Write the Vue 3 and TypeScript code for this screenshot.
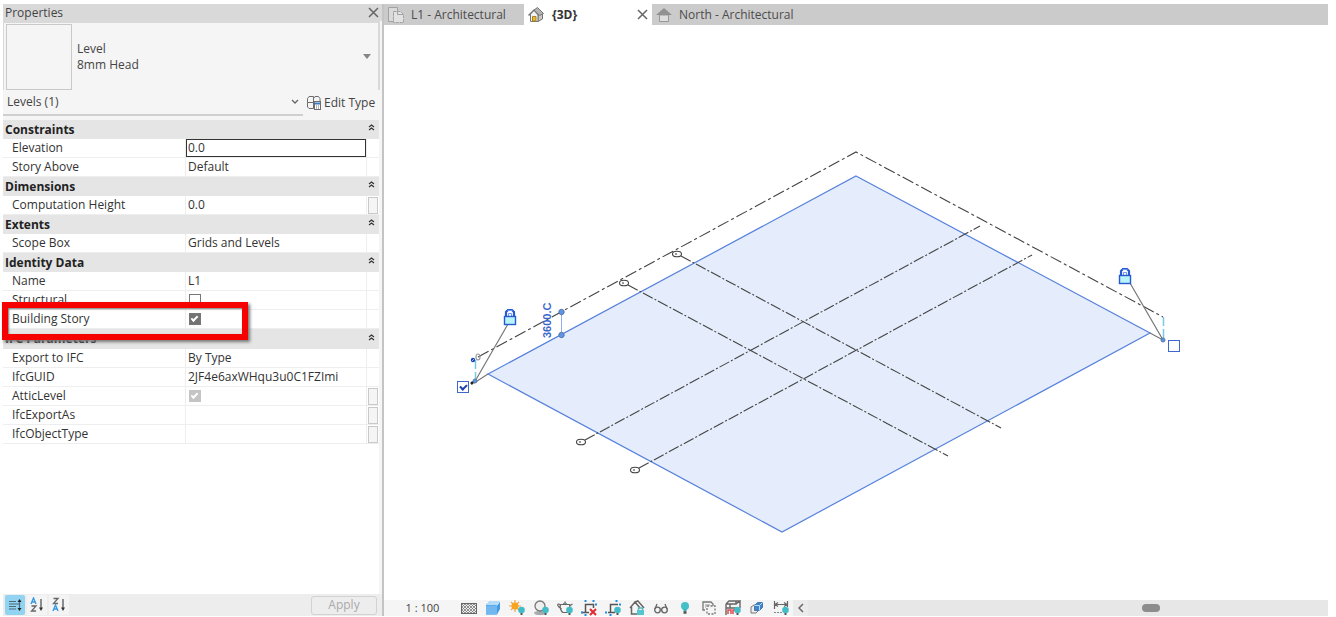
<script setup lang="ts">
import { ref } from 'vue'

type Kind = 'input' | 'check'
interface Row {
  id: string
  label: string
  kind: Kind
  value?: string
  checked?: boolean
  disabled?: boolean
  extra?: boolean
  boxed?: boolean
  marked?: boolean
}
interface Section {
  title: string
  rows: Row[]
}

const sections = ref<Section[]>([
  {
    title: 'Constraints',
    rows: [
      { id: 'elevation', label: 'Elevation', kind: 'input', value: '0.0', boxed: true },
      { id: 'story-above', label: 'Story Above', kind: 'input', value: 'Default' },
    ],
  },
  {
    title: 'Dimensions',
    rows: [{ id: 'height', label: 'Computation Height', kind: 'input', value: '0.0', extra: true }],
  },
  {
    title: 'Extents',
    rows: [{ id: 'scope', label: 'Scope Box', kind: 'input', value: 'Grids and Levels' }],
  },
  {
    title: 'Identity Data',
    rows: [
      { id: 'name', label: 'Name', kind: 'input', value: 'L1' },
      { id: 'structural', label: 'Structural', kind: 'check', checked: false },
      { id: 'story', label: 'Building Story', kind: 'check', checked: true, marked: true },
    ],
  },
  {
    title: 'IFC Parameters',
    rows: [
      { id: 'export', label: 'Export to IFC', kind: 'input', value: 'By Type' },
      { id: 'guid', label: 'IfcGUID', kind: 'input', value: '2JF4e6axWHqu3u0C1FZImi' },
      { id: 'attic', label: 'AtticLevel', kind: 'check', checked: true, disabled: true, extra: true },
      { id: 'export-as', label: 'IfcExportAs', kind: 'input', value: '', extra: true },
      { id: 'object-type', label: 'IfcObjectType', kind: 'input', value: '', extra: true },
    ],
  },
])

const gridLines = [
  { x1: 681, y1: 256, x2: 1001, y2: 428, cx: 677, cy: 254 },
  { x1: 628, y1: 285, x2: 948, y2: 456, cx: 624, cy: 283 },
  { x1: 585, y1: 440, x2: 980, y2: 226, cx: 581, cy: 442 },
  { x1: 639, y1: 468, x2: 1032, y2: 255, cx: 635, cy: 470 },
]
const locks = [
  { x: 510, y: 318 },
  { x: 1125, y: 277 },
]
const leftBubble = ref(true)
const rightBubble = ref(false)
</script>

<template>
  <div class="app">
    <aside class="panel">
      <header class="panel-title">
        <span>Properties</span>
        <button class="close" aria-label="Close properties">
          <svg width="11" height="11" viewBox="0 0 11 11"><path d="M1 1l9 9M10 1l-9 9" stroke="#666" stroke-width="1.5" /></svg>
        </button>
      </header>

      <button class="type-selector" aria-haspopup="listbox">
        <span class="thumb"></span>
        <span class="type-name">Level<br />8mm Head</span>
        <svg class="drop" width="8" height="5" viewBox="0 0 8 5"><path d="M0 0h8L4 5z" fill="#868686" /></svg>
      </button>

      <div class="filter">
        <div class="filter-select">
          <select aria-label="Element filter"><option>Levels (1)</option></select>
          <svg width="8" height="6" viewBox="0 0 8 6"><path d="M1 1l3 3 3-3" fill="none" stroke="#666" stroke-width="1.3" /></svg>
        </div>
        <button class="edit-type">
          <svg width="14" height="14" viewBox="0 0 14 14" fill="none" stroke="#6c6c6c">
            <path d="M.5 6.500V2.500L2 .5h4.500v6zM6.500 6.500v-4L8 .5h3.500l1.500 2v4zM.5 6.500v4.500l1.500 1.500h4.500v-6" />
            <rect x="7.500" y="5.500" width="6" height="8" fill="#fff" />
            <path d="M8 7.500h5" stroke="#367ac8" stroke-width="2" />
            <path d="M9 10h1M11 10h1M9 12h1M11 12h1" />
          </svg>
          Edit Type
        </button>
      </div>

      <div class="props">
        <table>
          <colgroup><col class="c-name" /><col /><col class="c-extra" /></colgroup>
          <tbody v-for="s in sections" :key="s.title">
            <tr class="section">
              <th colspan="2" scope="colgroup">{{ s.title }}</th>
              <td>
                <button class="fold" :aria-label="'Collapse ' + s.title">
                  <svg width="7" height="7" viewBox="0 0 7 7"><path d="M1 3l2.500-2L6 3M1 6l2.500-2L6 6" fill="none" stroke="#333" stroke-width="1.200" /></svg>
                </button>
              </td>
            </tr>
            <tr v-for="r in s.rows" :key="r.id" :class="{ marked: r.marked }">
              <td class="name"><label :for="r.id">{{ r.label }}</label></td>
              <td class="value">
                <input v-if="r.kind === 'check'" :id="r.id" v-model="r.checked" type="checkbox" class="tick" :disabled="r.disabled" />
                <input v-else :id="r.id" v-model="r.value" type="text" class="field" :class="{ boxed: r.boxed }" />
              </td>
              <td class="extra">
                <button v-if="r.extra" :aria-label="'Associate ' + r.label"></button>
                <span v-if="r.marked" class="marker"></span>
              </td>
            </tr>
          </tbody>
        </table>
      </div>

      <footer class="panel-foot">
        <button class="sort on" aria-label="Default order">
          <svg width="16" height="16" viewBox="0 0 16 16" fill="none" stroke="#4b6c7c" stroke-width="1.200">
            <path d="M2 4.500h7M2 7h7M2 9.500h7M2 12h7M9 7h3M12.500 4v8" />
            <path d="M10.500 5l2-3 2 3zM10.500 11l2 3 2-3z" fill="#222" stroke="none" />
          </svg>
        </button>
        <button class="sort" aria-label="Sort ascending">
          <svg width="16" height="16" viewBox="0 0 16 16" fill="none">
            <path d="M2 7l2.500-6L7 7M3 5h3" stroke="#3a9be0" stroke-width="1.400" />
            <path d="M2.500 9H7l-4.500 5H7" stroke="#666" stroke-width="1.300" />
            <path d="M12 2v9" stroke="#555" stroke-width="1.300" /><path d="M10 10.500h4l-2 3.500z" fill="#333" />
          </svg>
        </button>
        <button class="sort" aria-label="Sort descending">
          <svg width="16" height="16" viewBox="0 0 16 16" fill="none">
            <path d="M2.500 1.500H7l-4.500 5H7" stroke="#666" stroke-width="1.300" />
            <path d="M2 14l2.500-6L7 14M3 12h3" stroke="#3a9be0" stroke-width="1.400" />
            <path d="M12 2v9" stroke="#555" stroke-width="1.300" /><path d="M10 10.500h4l-2 3.500z" fill="#333" />
          </svg>
        </button>
        <button class="apply" disabled>Apply</button>
      </footer>
    </aside>

    <main class="view">
      <nav class="tabs">
        <button class="tab first">
          <svg width="16" height="16" viewBox="0 0 16 16" fill="#dadada" stroke="#a2a2a2">
            <path d="M.5.500h9v4h-4v10h-5z" /><path d="M5.500 4.500h7l3 3v8h-10z" fill="#e2e2e2" stroke-dasharray="3 1" /><path d="M9.500 4.500v3h6" fill="none" />
          </svg>
          <span>L1 - Architectural</span>
        </button>
        <div class="tab active">
          <svg width="16" height="16" viewBox="0 0 16 16" stroke="#777">
            <path d="M10 14.500V7l-2-5 2-.500 4.500 5V12z" fill="#c9c9c9" />
            <path d="M2.500 7v7.500H10V7L6 3z" fill="#f2f2f2" />
            <path d="M.5 8.500L6 3l5 5.500" fill="none" stroke-width="1.500" />
            <path d="M6 3l3.500-2.500 6 6-4 2z" fill="#b2b2b2" />
            <path d="M4.500 9.500h3.500V14H4.500z" fill="#efb52c" stroke="#a88425" />
          </svg>
          <span>{3D}</span>
          <button class="close" aria-label="Close view">
            <svg width="11" height="11" viewBox="0 0 11 11"><path d="M1 1l9 9M10 1l-9 9" stroke="#666" stroke-width="1.500" /></svg>
          </button>
        </div>
        <button class="tab">
          <svg width="16" height="16" viewBox="0 0 16 16"><path d="M3.500 8h9v6.500h-9z" fill="#dedede" stroke="#999" /><path d="M0 8l8-7 8 7z" fill="#919191" /></svg>
          <span>North - Architectural</span>
        </button>
      </nav>

      <div class="stage">
        <svg class="drawing" viewBox="384 25 944 575" preserveAspectRatio="xMinYMin meet">
          <polygon points="856,176 1150,333 782,532 488,374" fill="#e5edfc" stroke="#5580dc" stroke-width="1.200" />
          <path d="M478 357L856 152L1163 317" fill="none" stroke="#444" stroke-width="1.100" stroke-dasharray="12 3 3 3" />
          <g stroke="#444" fill="none" stroke-width="1.100">
            <template v-for="g in gridLines" :key="g.cx">
              <line :x1="g.x1" :y1="g.y1" :x2="g.x2" :y2="g.y2" stroke-dasharray="11 2 2 2" />
              <ellipse :cx="g.cx" :cy="g.cy" rx="4.500" ry="2.800" />
              <path :d="`M${g.cx - 1} ${g.cy - 1}v2`" />
            </template>
          </g>

          <g stroke="#777" fill="none" stroke-width="1.200">
            <path d="M508 324L474 383L488 374M1130 283L1163 340L1150 333" />
            <ellipse cx="478" cy="357" rx="2" ry="3" stroke="#999" />
          </g>
          <path d="M475.500 360V380M1163.500 317V338" stroke="#79c8e4" stroke-width="1.500" stroke-dasharray="9 3" />
          <path d="M561.500 313V334" stroke="#91aff0" />
          <g fill="#5d94ea" stroke="#5a78a8">
            <circle cx="561.500" cy="312" r="2.700" /><circle cx="561.500" cy="335" r="2.700" />
            <circle cx="1163" cy="340" r="2" /><circle cx="475" cy="381" r="2" />
          </g>
          <circle cx="473" cy="360" r="2.200" fill="#1742b8" /><path d="M471 384l2-2" stroke="#222" stroke-width="2.500" />
          <path d="M472 361l2-2" stroke="#9cc0ff" />
          <text class="dim" transform="translate(551 338) rotate(-90)">3600.C</text>

          <g v-for="l in locks" :key="l.x" :transform="`translate(${l.x} ${l.y})`">
            <path d="M-4-1v-5l2-2h4l2 2v5" fill="none" stroke="#2858d2" stroke-width="2.200" />
            <path d="M-2.500-7.500h5M-1.500-2v-2.500h3V-2" fill="none" stroke="#6b97f0" />
            <rect x="-5.500" y="-1.500" width="11" height="8" fill="#b8f4f8" stroke="#2858d2" stroke-width="1.400" />
          </g>

          <foreignObject x="457" y="381" width="12" height="12">
            <input v-model="leftBubble" type="checkbox" class="bubble" aria-label="Show left level head" />
          </foreignObject>
          <foreignObject x="1168" y="340" width="12" height="12">
            <input v-model="rightBubble" type="checkbox" class="bubble" aria-label="Show right level head" />
          </foreignObject>
        </svg>
      </div>

      <footer class="view-bar">
        <button class="scale">1 : 100</button>
        <button class="tool" aria-label="Detail level">
          <svg viewBox="0 0 16 16"><rect x=".5" y="3.500" width="15" height="10" fill="#eee" stroke="#666" /><path d="M1 7l3-3M1 10l6-6M1 13l9-9M4 13l9-9M7 13l8-8M10 13l5-5M13 13l2-2M1 10l3 3M1 7l6 6M1 4l9 9M4 4l9 9M7 4l8 8M10 4l5 5M13 4l2 2" stroke="#777" stroke-width=".8" /></svg>
        </button>
        <button class="tool" aria-label="Visual style">
          <svg viewBox="0 0 16 16"><path d="M1 5l4-4h10v8l-3 5.500H1z" fill="#429be2" /><path d="M1 5l4-4h10l-3 4z" fill="#b4dcf8" /><path d="M1 5.500h11v9H1z" fill="#71b8f0" /><path d="M12 5.500l3-4.500" stroke="#d2ecff" /></svg>
        </button>
        <button class="tool" aria-label="Sun path">
          <svg viewBox="0 0 16 16"><path d="M6 0v12M0 6h12M2 2l8 8M10 2l-8 8" stroke="#eaa64b" stroke-width="1.200" /><circle cx="6" cy="6" r="3.500" fill="#f8a51d" /><circle cx="12.500" cy="10" r="3.300" fill="#42bcc8" /><path d="M11.500 14h2" stroke="#555" stroke-width="2" /></svg>
        </button>
        <button class="tool" aria-label="Shadows">
          <svg viewBox="0 0 16 16"><ellipse cx="7" cy="13" rx="6" ry="2" fill="#aaa" /><circle cx="7" cy="6" r="5" fill="#eee" stroke="#777" stroke-width="1.300" /><circle cx="12.500" cy="10" r="3.300" fill="#42bcc8" /><path d="M11.500 14h2" stroke="#555" stroke-width="2" /></svg>
        </button>
        <button class="tool" aria-label="Rendering">
          <svg viewBox="0 0 16 16"><path d="M3.500 5C1 3 0 4.500 1.500 6.500L4.500 9M3.500 4.500h9c1 3-.5 7-2.500 8H6c-2-1-3.500-5-2.500-8M12.500 6l3-2M6.500 4.500c0-2 3-2 3 0M8 3V1.500" fill="none" stroke="#666" stroke-width="1.200" /><circle cx="12.500" cy="10" r="3.300" fill="#42bcc8" /><path d="M11.500 14h2" stroke="#555" stroke-width="2" /></svg>
        </button>
        <button class="tool" aria-label="Crop view">
          <svg viewBox="0 0 16 16" fill="none"><path d="M4.500 12.500v-8h8V8M0 12.500h8" stroke="#555" stroke-width="1.500" /><path d="M4.500 0v2M4.500 14v2M0 12.500h2M12.500 0v2M14 4.500h2" stroke="#218ee6" stroke-width="2" /><path d="M9 9l6 6M15 9l-6 6" stroke="#e02930" stroke-width="2" /></svg>
        </button>
        <button class="tool" aria-label="Show crop region">
          <svg viewBox="0 0 16 16" fill="none"><path d="M5.500 12.500v-8H13M3 12.500h7" stroke="#555" stroke-width="1.500" /><path d="M11.500 0v2M0 12.500h2M5.500 14v2M14 4.500h2" stroke="#218ee6" stroke-width="2" /><circle cx="12.500" cy="10" r="3.300" fill="#42bcc8" /><path d="M11.500 14h2" stroke="#555" stroke-width="2" /></svg>
        </button>
        <button class="tool" aria-label="Lock 3D view">
          <svg viewBox="0 0 16 16" fill="none"><path d="M1 8l5-6 5 6M6 2l3-1 6 7M2.500 7v7H8M9 1l-3 1" stroke="#666" stroke-width="1.500" /><rect x="8" y="10" width="7" height="5" fill="#55c6cf" /><path d="M9.500 10V8h4v2" stroke="#55b6c0" stroke-width="1.400" /></svg>
        </button>
        <button class="tool" aria-label="Temporary hide or isolate">
          <svg viewBox="0 0 16 16" fill="none" stroke="#666" stroke-width="1.300"><circle cx="4.500" cy="10" r="2.800" /><circle cx="11.500" cy="10" r="2.800" /><path d="M7.300 9.500h1.400M2 9l2-5M14 9l-2-5" /></svg>
        </button>
        <button class="tool" aria-label="Reveal hidden elements">
          <svg viewBox="0 0 16 16"><circle cx="8" cy="6" r="4" fill="#45c0c9" /><path d="M6 9h4l-1 3H7z" fill="#45b0b9" /><path d="M6.500 12.500h3" stroke="#555" stroke-width="2.500" /></svg>
        </button>
        <button class="tool" aria-label="Temporary view properties">
          <svg viewBox="0 0 16 16" fill="none"><path d="M4 10H2V2h8l2 2v2" stroke="#777" stroke-width="1.300" /><path d="M6 6h8v8H6z" stroke="#777" stroke-dasharray="2 1.500" stroke-width="1.300" /><path d="M4 5h5M4 7h1" stroke="#999" /></svg>
        </button>
        <button class="tool" aria-label="Analytical model">
          <svg viewBox="0 0 16 16" fill="none"><path d="M1 4l3-3h11M1 4h10V1M1 4v11M11 4l4-3v7M5 4v4M1 8h10" stroke="#666" stroke-width="1.400" /><path d="M3 14v-4h3v4M8 14v-4h2" stroke="#df4a50" stroke-width="1.500" /><circle cx="12.500" cy="10" r="3.300" fill="#42bcc8" /><path d="M11.500 14h2" stroke="#555" stroke-width="2" /></svg>
        </button>
        <button class="tool" aria-label="Displacement sets">
          <svg viewBox="0 0 16 16"><path d="M2 7l3-2h4v6l-2 2H2z" fill="#eee" stroke="#777" /><path d="M5.500 5.500l3-3h5v5l-3 3h-5z" fill="#3d85cf" stroke="#4779aa" /><path d="M5.500 5.500h5v5M10.500 5.500l3-3" fill="none" stroke="#b9dcfa" /></svg>
        </button>
        <button class="tool" aria-label="Reveal constraints">
          <svg viewBox="0 0 16 16" fill="none"><path d="M1.500 1v8M14.500 1v6M2 4.500h12M5 2.500l-3 2 3 2M11 2.500l3 2-3 2" stroke="#666" stroke-width="1.200" /><path d="M1 12.500h9" stroke="#888" stroke-dasharray="2 1" /><circle cx="12.500" cy="10" r="3.300" fill="#42bcc8" /><path d="M11.500 14h2" stroke="#555" stroke-width="2" /></svg>
        </button>
        <button class="back" aria-label="Scroll left">
          <svg width="6" height="10" viewBox="0 0 6 10"><path d="M5 1L1 5l4 4" fill="none" stroke="#666" stroke-width="1.500" /></svg>
        </button>
        <div class="scroll"><span class="scroll-thumb"></span></div>
      </footer>
    </main>
  </div>
</template>

<style>
body { margin: 0; background: #fff; }
</style>

<style scoped>
.app {
  box-sizing: border-box;
  display: flex;
  height: 100vh;
  padding: 4px 8px 1px 3px;
  font-family: "Open Sans", "Noto Sans", sans-serif;
  font-size: 12px;
  line-height: 16px;
  color: #444;
}
button, input, select { font: inherit; color: inherit; margin: 0; padding: 0; border: 0; background: none; border-radius: 0; }
svg { display: block; flex: none; }

.panel {
  box-sizing: border-box;
  flex: none;
  display: flex;
  flex-direction: column;
  width: 381px;
  background: #f5f5f5;
  border-right: 2px solid #c4c4c4;
}
.panel-title {
  display: flex;
  align-items: center;
  justify-content: space-between;
  height: 17px;
  padding: 0 3px 0 2px;
  line-height: 18px;
  background: #d9d9d9;
}
.close { display: flex; }
.type-selector {
  box-sizing: border-box;
  display: flex;
  align-items: center;
  height: 69px;
  margin: 0 2px 0 0;
  padding: 0 7px 0 2px;
  border: 2px solid #d9d9d9;
  border-width: 2px 2px 0 1px;
  text-align: left;
}
.thumb { box-sizing: border-box; width: 66px; height: 66px; border: 1px solid #c9c9c9; }
.type-name { flex: 1; margin-left: 5px; }
.filter { display: flex; height: 30px; }
.filter-select {
  box-sizing: border-box;
  display: flex;
  align-items: center;
  width: 300px;
  height: 26px;
  padding: 0 4px 0 4px;
  border-bottom: 2px solid #d0d0d0;
}
.filter-select select { flex: 1; appearance: none; outline: none; }
.edit-type { display: flex; align-items: center; gap: 3px; height: 26px; margin-left: 4px; }

.props { flex: 1; min-height: 0; margin-right: 3px; background: #fff; }
table { width: 100%; table-layout: fixed; border-spacing: 0; color: #333; }
.c-name { width: 183px; }
.c-extra { width: 12px; }
th, td { box-sizing: border-box; height: 19px; padding: 0; line-height: 18px; }
.section th, .section td { background: #e5e5e5; }
th { padding-left: 2px; text-align: left; font-weight: 700; color: #222; }
tbody:last-child th { height: 20px; }
.name, .value, .extra { border-bottom: 1px solid #eee; }
.name { padding-left: 9px; border-right: 1px solid #eee; }
.value { border-right: 1px solid #eee; }
.fold { display: flex; margin: 0 0 4px 1px; }
.field { display: block; box-sizing: border-box; width: 100%; height: 18px; padding: 0 2px; outline: none; }
.boxed { border: 1px solid #333; padding: 0 1px; }
.extra button { display: block; box-sizing: border-box; width: 10px; height: 17px; margin-left: 1px; border: 1px solid #c9c9c9; background: #f5f5f5; }
.tick {
  display: block;
  appearance: none;
  box-sizing: border-box;
  width: 12px;
  height: 12px;
  margin-left: 3px;
  border: 1px solid #777;
  background: #fff;
}
.tick:checked { background: #737373; }
.tick:checked:disabled { background: #c4c4c4; border-color: #c4c4c4; }
.tick:checked::after {
  content: "";
  display: block;
  width: 5px;
  height: 2px;
  margin: 2px 0 0 1px;
  border: solid #fff;
  border-width: 0 0 2px 2px;
  transform: rotate(-45deg);
}
.marked { position: relative; }
.marker {
  position: absolute;
  z-index: 1;
  top: -8px;
  left: -1px;
  box-sizing: border-box;
  width: 246px;
  height: 38px;
  border: 6px solid #f60000;
  box-shadow: 2px 2px 3px #777, inset 1px 1px 2px #777;
  pointer-events: none;
}

.panel-foot {
  box-sizing: border-box;
  display: flex;
  align-items: center;
  height: 22px;
  padding: 0 5px 0 2px;
  background: #ededed;
}
.sort { display: flex; align-items: center; justify-content: center; width: 20px; height: 20px; margin-right: 2px; background: #f4f4f4; }
.on { border-radius: 2px; background: #91d3f0; }
.apply { box-sizing: border-box; width: 66px; height: 19px; margin-left: auto; border: 1px solid #d2d2d2; border-radius: 3px; color: #aaa; }

.view { flex: 1; min-width: 0; display: flex; flex-direction: column; }
.tabs { display: flex; height: 21px; background: #cbcbcb; }
.tab { display: flex; align-items: center; gap: 7px; padding: 0 4px; color: #4c4c4c; }
.first { width: 140px; }
.active { box-sizing: border-box; width: 128px; gap: 8px; background: #fff; font-weight: 700; color: #333; }
.active .close { margin-left: auto; }

.stage { flex: 1; min-height: 0; background: #fff; }
.drawing { width: 100%; height: 100%; }
.dim { font-family: "Liberation Sans", Arial, sans-serif; font-size: 11px; font-weight: 700; fill: #3c66cc; }
.bubble { display: block; appearance: none; box-sizing: border-box; width: 12px; height: 12px; border: 1px solid #3e68cc; background: #fff; }
.bubble:checked::after {
  content: "";
  display: block;
  width: 5px;
  height: 3px;
  margin: 2px 0 0 2px;
  border: solid #1d3fae;
  border-width: 0 0 2px 2px;
  transform: rotate(-45deg);
}

.view-bar { display: flex; height: 16px; background: #f5f5f5; }
.scale { width: 73px; padding-left: 4px; font-size: 11px; }
.tool { display: flex; flex: none; justify-content: center; width: 24px; }
.tool svg { width: 16px; height: 16px; }
.back { display: flex; flex: none; align-items: center; justify-content: center; width: 15px; background: #ebebeb; }
.scroll { display: flex; flex: 1; align-items: center; justify-content: center; background: #e7e7e7; }
.scroll-thumb { width: 18px; height: 8px; margin-left: 32%; border-radius: 4px; background: #8d8d8d; }
</style>
